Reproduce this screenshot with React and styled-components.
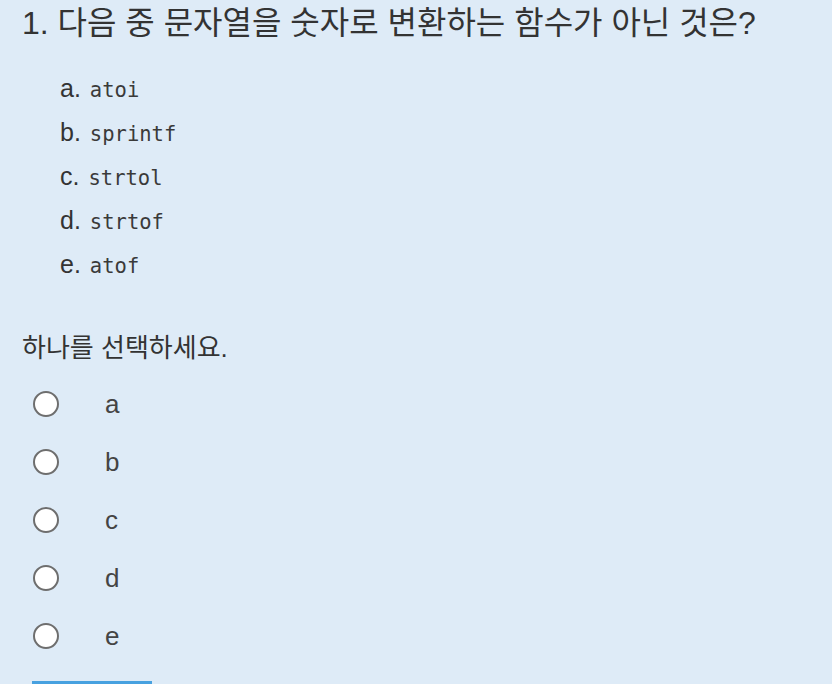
import React from 'react';
import styled, { createGlobalStyle } from 'styled-components';

const GlobalStyle = createGlobalStyle`
  html, body {
    margin: 0;
    padding: 0;
    background: #deebf7;
  }
  body {
    font-family: "Liberation Sans", Arial, "Noto Sans CJK KR", sans-serif;
    color: #333;
  }
`;

const Page = styled.div`
  width: 832px;
  height: 684px;
  overflow: hidden;
  background: #deebf7;
`;

const Title = styled.h1`
  margin: 0;
  padding: 2px 0 0 22px;
  font-size: 32px;
  font-weight: 400;
  line-height: 42px;
  color: #333;
`;

const Choices = styled.ol`
  list-style: none;
  margin: 30px 0 0;
  padding: 0 0 0 60px;
  display: flex;
  flex-direction: column;
  gap: 10px;
`;

const Choice = styled.li`
  display: flex;
  align-items: baseline;
  height: 34px;
  font-size: 25px;
`;

const Code = styled.code`
  font-family: "DejaVu Sans Mono", "Liberation Mono", monospace;
  font-size: 20.5px;
  margin-left: 9px;
  color: #3a3a3a;
`;

const Prompt = styled.p`
  margin: 47px 0 0 22px;
  font-size: 26px;
  line-height: 34px;
`;

const Answers = styled.div`
  margin-top: 10px;
  padding-left: 33px;
  display: flex;
  flex-direction: column;
`;

const Answer = styled.label`
  display: flex;
  align-items: center;
  height: 58px;
  font-size: 26px;
  color: #444;
`;

const Radio = styled.span`
  width: 26px;
  height: 26px;
  border-radius: 50%;
  border: 2px solid #6e6e6e;
  background: #fff;
  box-sizing: border-box;
  margin-right: 46px;
  flex-shrink: 0;
`;

const Button = styled.div`
  margin: 16px 0 0 32px;
  width: 120px;
  height: 40px;
  background: #47a1e0;
`;

const items = [
  ['a', 'atoi'],
  ['b', 'sprintf'],
  ['c', 'strtol'],
  ['d', 'strtof'],
  ['e', 'atof'],
];

export default function App() {
  return (
    <Page>
      <GlobalStyle />
      <Title>1. 다음 중 문자열을 숫자로 변환하는 함수가 아닌 것은?</Title>
      <Choices>
        {items.map(([k, v]) => (
          <Choice key={k}>
            {k}.<Code>{v}</Code>
          </Choice>
        ))}
      </Choices>
      <Prompt>하나를 선택하세요.</Prompt>
      <Answers>
        {items.map(([k]) => (
          <Answer key={k}>
            <Radio />
            {k}
          </Answer>
        ))}
      </Answers>
      <Button />
    </Page>
  );
}
